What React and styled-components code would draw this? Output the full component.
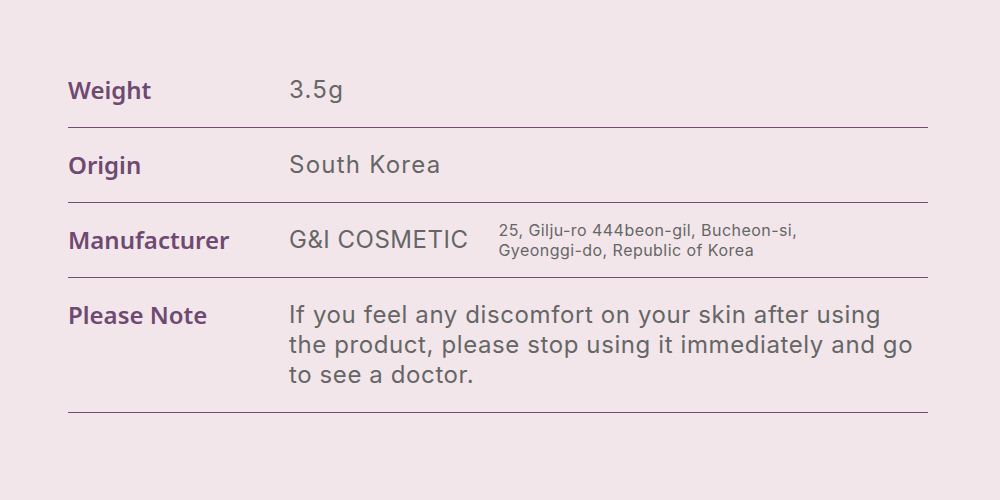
import styled, { createGlobalStyle } from "styled-components";

const GlobalStyle = createGlobalStyle`
  html, body {
    margin: 0;
    padding: 0;
    background: #f2e6eb;
  }
`;

const rows = [
  { label: "Weight", value: "3.5g", tracking: 1.25 },
  { label: "Origin", value: "South Korea", tracking: 1.25 },
  {
    label: "Manufacturer",
    value: "G&I COSMETIC",
    tracking: 0.5,
    note: ["25, Gilju-ro 444beon-gil, Bucheon-si,", "Gyeonggi-do, Republic of Korea"],
  },
  {
    label: "Please Note",
    value:
      "If you feel any discomfort on your skin after using the product, please stop using it immediately and go to see a doctor.",
    tracking: 0.6,
  },
];

export default function App() {
  return (
    <>
      <GlobalStyle />
      <Page>
        <Table>
          {rows.map((r) => (
            <Row key={r.label}>
              <Label>{r.label}</Label>
              <ValueCell>
                <Value $tracking={r.tracking}>{r.value}</Value>
                {r.note && (
                  <Note>
                    {r.note[0]}
                    <br />
                    {r.note[1]}
                  </Note>
                )}
              </ValueCell>
            </Row>
          ))}
        </Table>
      </Page>
    </>
  );
}

const Page = styled.div`
  width: 1000px;
  height: 500px;
  padding: 53px 72px 0 68px;
  box-sizing: border-box;
`;

const Table = styled.div`
  width: 860px;
  display: flex;
  flex-direction: column;
`;

const Row = styled.div`
  display: grid;
  grid-template-columns: 221px 1fr;
  padding: 22px 0;
  border-bottom: 1px solid #714d75;
`;

const Label = styled.div`
  font-family: "Noto Sans", sans-serif;
  font-weight: 600;
  font-size: 24px;
  line-height: 30px;
  color: #6e4a72;
`;

const ValueCell = styled.div`
  display: flex;
  align-items: center;
  gap: 30px;
  height: 100%;
`;

const Value = styled.div`
  font-family: Inter, sans-serif;
  font-size: 24px;
  line-height: 30px;
  letter-spacing: ${(p) => p.$tracking}px;
  color: #666666;
  max-width: 628px;
`;

const Note = styled.div`
  font-family: Inter, sans-serif;
  font-size: 16px;
  line-height: 20px;
  letter-spacing: 0.45px;
  color: #666666;
  margin: -5px 0;
`;
